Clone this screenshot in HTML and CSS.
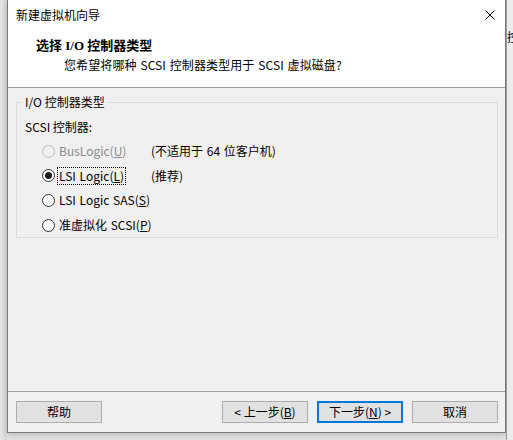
FILE: index.html
```html
<!DOCTYPE html>
<html lang="zh-CN">
<head>
<meta charset="utf-8">
<title>新建虚拟机向导</title>
<link rel="stylesheet" href="styles.css">
</head>
<body>
<div class="page">
  <div class="shadow-left"></div>
  <div class="dialog">
    <div class="header">
      <div class="titlebar">
        <span class="title">新建虚拟机向导</span>
        <svg class="close" width="10" height="10" viewBox="0 0 10 10"><path d="M0.5 0.5 L9.5 9.5 M9.5 0.5 L0.5 9.5" stroke="#000" stroke-width="1" fill="none"/></svg>
      </div>
      <div class="heading">选择 I/O 控制器类型</div>
      <div class="subtitle">您希望将哪种 SCSI 控制器类型用于 SCSI 虚拟磁盘?</div>
    </div>
    <div class="body">
      <fieldset class="group">
        <legend>I/O 控制器类型</legend>
        <div class="group-label">SCSI 控制器:</div>
        <div class="options">
          <div class="opt disabled"><span class="radio"></span><span class="lbl">BusLogic(<u>U</u>)</span></div>
          <div class="note">(不适用于 64 位客户机)</div>
          <div class="opt"><span class="radio checked"></span><span class="lbl focus">LSI Logic(<u>L</u>)</span></div>
          <div class="note">(推荐)</div>
          <div class="opt"><span class="radio"></span><span class="lbl">LSI Logic SAS(<u>S</u>)</span></div>
          <div class="note"></div>
          <div class="opt"><span class="radio"></span><span class="lbl">准虚拟化 SCSI(<u>P</u>)</span></div>
          <div class="note"></div>
        </div>
      </fieldset>
    </div>
    <div class="footer">
      <button class="btn">帮助</button>
      <div class="spacer"></div>
      <button class="btn">&lt; 上一步(<u>B</u>)</button>
      <button class="btn default">下一步(<u>N</u>) &gt;</button>
      <button class="btn">取消</button>
    </div>
  </div>
  <div class="right-strip"><span class="bg-char">控</span></div>
</div>
</body>
</html>
```
FILE: styles.css
```css
* { box-sizing: border-box; }
html, body { margin: 0; padding: 0; }
body {
  font-family: "Noto Sans CJK SC", "Noto Sans", sans-serif;
  font-size: 12px;
  color: #000;
  background: #e4e4e4;
}
.page {
  width: 513px;
  height: 440px;
  display: flex;
  align-items: flex-start;
  overflow: hidden;
  background: linear-gradient(#e8e8e8, #e2e2e2);
}
.shadow-left {
  width: 7px;
  height: 440px;
  background: linear-gradient(90deg, #e6e6e6, #d6d6d6);
}
.dialog {
  width: 499px;
  height: 433px;
  background: #f0f0f0;
  border: 1px solid #7a7a7a;
  border-top: none;
  display: flex;
  flex-direction: column;
  box-shadow: 0 2px 6px rgba(0,0,0,0.18);
}
.header {
  background: #fff;
  height: 88px;
  border-bottom: 1px solid #a0a0a0;
  flex: none;
}
.titlebar {
  height: 30px;
  display: flex;
  align-items: center;
  padding: 0 10px 0 8px;
}
.title { flex: 1; line-height: 16px; }
.close { display: block; }
.heading {
  margin: 8px 0 0 28px;
  line-height: 16px;
  font-weight: bold;
  font-family: "Liberation Serif", "Noto Sans CJK SC", serif;
  font-size: 13px;
}
.subtitle {
  margin: 3px 0 0 56px;
  line-height: 16px;
  word-spacing: 1px;
  letter-spacing: 0.1px;
}
.body {
  flex: 1;
  padding: 7px 7px 0 8px;
}
.group {
  margin: 0;
  border: 1px solid #dcdcdc;
  padding: 0 0 0 6px;
  min-width: 0;
}
.group legend {
  padding: 0 2px;
  line-height: 14px;
}
.group-label {
  line-height: 16px;
  margin-top: 10px;
  margin-left: 2px;
}
.options {
  margin-top: 4px;
  display: grid;
  grid-template-columns: 109px auto;
  grid-auto-rows: 24.6px;
  align-items: center;
  padding-left: 19px;
}
.opt {
  display: flex;
  align-items: center;
  gap: 3px;
  line-height: 16px;
  white-space: nowrap;
}
.note { line-height: 16px; white-space: nowrap; word-spacing: 1px; }
.radio {
  width: 13px;
  height: 13px;
  border-radius: 50%;
  border: 1px solid #333;
  background: #fff;
  display: flex;
  align-items: center;
  justify-content: center;
  flex: none;
}
.radio.checked::after {
  content: "";
  width: 7px;
  height: 7px;
  border-radius: 50%;
  background: #1a1a1a;
}
.disabled .radio { border-color: #bcbcbc; background: #f0f0f0; }
.disabled .lbl { color: #8a8a8a; }
.lbl { padding: 0 1px; word-spacing: 1px; }
.lbl.focus { outline: 1px dotted #000; outline-offset: 0; }
.footer {
  flex: none;
  height: 41px;
  border-top: 1px solid #a0a0a0;
  display: flex;
  align-items: center;
  padding: 0 7px 0 8px;
  gap: 9px;
}
.spacer { flex: 1; }
.btn {
  width: 86px;
  height: 22px;
  background: #e1e1e1;
  border: 1px solid #adadad;
  font-family: inherit;
  font-size: 12px;
  line-height: 16px;
  padding: 0;
  color: #000;
  white-space: nowrap;
}
.btn.default { border: 2px solid #0078d7; }
.right-strip {
  width: 7px;
  height: 440px;
  background: #ececec;
  border-left: 1px solid #9a9a9a;
  overflow: hidden;
  padding-top: 29px;
}
.bg-char {
  display: block;
  font-size: 12px;
  line-height: 16px;
  white-space: nowrap;
}
```
